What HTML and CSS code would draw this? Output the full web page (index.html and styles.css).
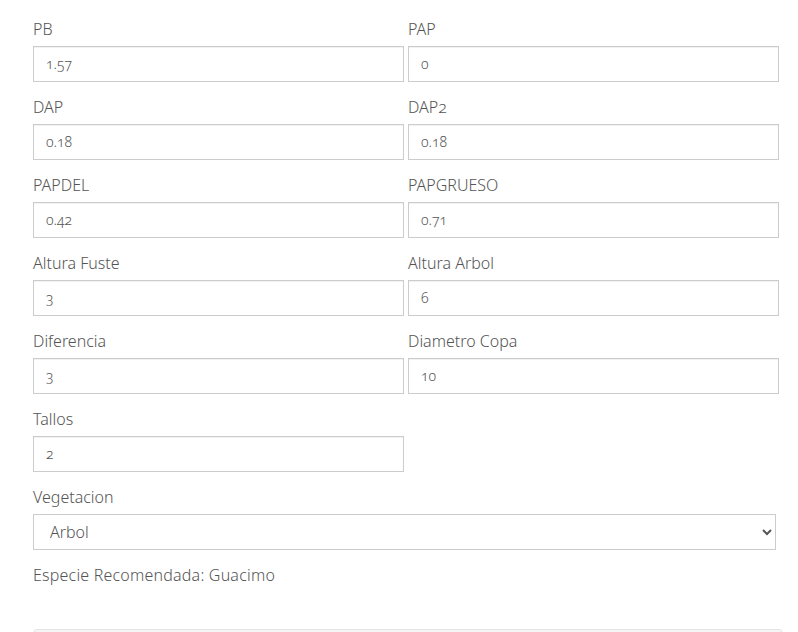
FILE: index.html
```html
<!DOCTYPE html>
<html lang="es">
<head>
<meta charset="utf-8">
<title>Formulario</title>
<link rel="stylesheet" href="styles.css">
</head>
<body>
<div class="page">
  <form class="form">
    <div class="grid">
      <div class="group"><label class="label">PB</label><input class="input" type="text" value="1.57"></div>
      <div class="group"><label class="label">PAP</label><input class="input" type="text" value="0"></div>
      <div class="group"><label class="label">DAP</label><input class="input" type="text" value="0.18"></div>
      <div class="group"><label class="label">DAP2</label><input class="input" type="text" value="0.18"></div>
      <div class="group"><label class="label">PAPDEL</label><input class="input" type="text" value="0.42"></div>
      <div class="group"><label class="label">PAPGRUESO</label><input class="input" type="text" value="0.71"></div>
      <div class="group"><label class="label">Altura Fuste</label><input class="input" type="text" value="3"></div>
      <div class="group"><label class="label">Altura Arbol</label><input class="input" type="text" value="6"></div>
      <div class="group"><label class="label">Diferencia</label><input class="input" type="text" value="3"></div>
      <div class="group"><label class="label">Diametro Copa</label><input class="input" type="text" value="10"></div>
      <div class="group"><label class="label">Tallos</label><input class="input" type="text" value="2"></div>
    </div>
    <div class="group wide">
      <label class="label">Vegetacion</label>
      <select class="select">
        <option>Arbol</option>
        <option>Arbusto</option>
      </select>
    </div>
    <p class="result">Especie Recomendada: Guacimo</p>
  </form>
  <div class="well"></div>
</div>
</body>
</html>
```
FILE: styles.css
```css
html, body {
  margin: 0;
  padding: 0;
  background: #fff;
}
body {
  font-family: "Noto Sans", "Open Sans", sans-serif;
  font-variant-numeric: oldstyle-nums;
  color: #555;
  font-size: 16px;
}
.page {
  padding: 19px 0 0 33px;
}
.grid {
  display: grid;
  grid-template-columns: 371px 371px;
  column-gap: 4px;
}
.group {
  display: flex;
  flex-direction: column;
  margin-bottom: 15px;
}
.label {
  font-size: 16px;
  line-height: 20px;
  font-weight: 300;
  margin-bottom: 7px;
  color: #555;
}
.input {
  box-sizing: border-box;
  height: 36px;
  width: 100%;
  margin: 0;
  border: 1px solid #ccc;
  border-radius: 0;
  padding: 0 0 1px 12px;
  font-family: inherit;
  font-variant-numeric: oldstyle-nums;
  font-size: 14px;
  font-weight: 300;
  color: #555;
  background: #fff;
  box-shadow: inset 0 1px 1px rgba(0,0,0,0.06);
  outline: none;
}
.wide {
  width: 743px;
}
.select {
  box-sizing: border-box;
  height: 36px;
  width: 743px;
  margin: 0;
  border: 1px solid #ccc;
  border-radius: 0;
  padding: 0 12px;
  font-family: inherit;
  font-size: 16px;
  font-weight: 300;
  color: #555;
  background: #fff;
}
.result {
  margin: 0 0 42px;
  font-size: 16px;
  line-height: 20px;
  padding-bottom: 2px;
  font-weight: 300;
  letter-spacing: 0.2px;
}
.well {
  width: 748px;
  height: 40px;
  border: 1px solid #e3e3e3;
  border-radius: 4px;
  background: #f5f5f5;
}
```
